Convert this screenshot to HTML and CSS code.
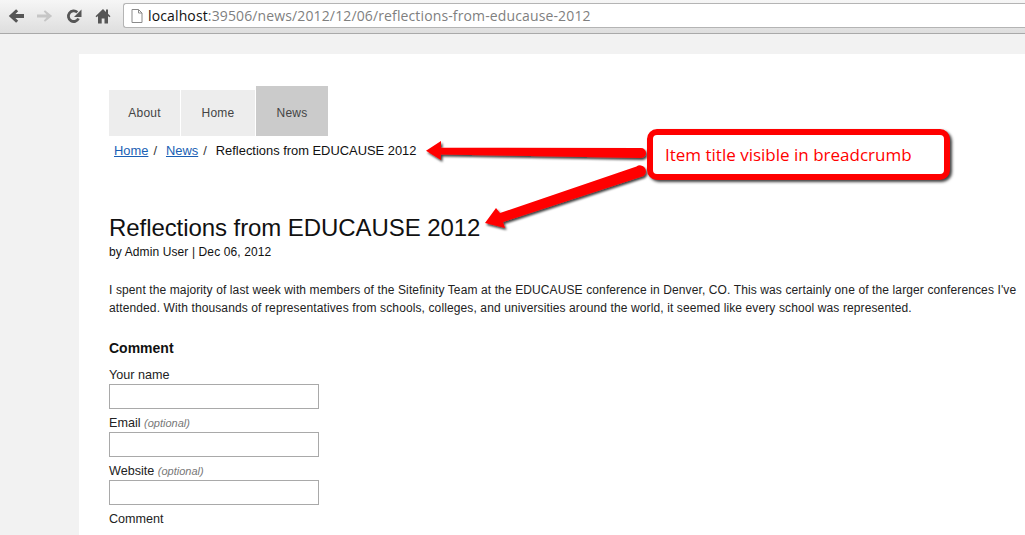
FILE: index.html
```html
<!DOCTYPE html>
<html lang="en">
<head>
<meta charset="utf-8">
<title>Reflections from EDUCAUSE 2012</title>
<link rel="stylesheet" href="styles.css">
</head>
<body>
<header class="toolbar">
  <svg class="nav-icon" viewBox="0 0 16 16" width="16" height="16"><path d="M16 6H7.400l2.800-2.800L8.100 1.200.8 8l7.300 6.800 2.100-2L7.400 10H16z" fill="#565656"/></svg>
  <svg class="nav-icon" viewBox="0 0 16 16" width="16" height="16"><path d="M0 6.500h9.600L6.800 3.400 8 2.200 15.200 8 8 13.800l-1.200-1.200 2.800-3.100H0z" fill="#c6c6c6"/></svg>
  <svg class="nav-icon" viewBox="0 0 16 16" width="16" height="16"><path d="M12.500 10.500A5.300 5.300 0 1 1 11.300 4.300" fill="none" stroke="#565656" stroke-width="2.800"/><path d="M15.500 1.500v7.500H8z" fill="#565656"/></svg>
  <svg class="nav-icon" viewBox="0 0 16 16" width="16" height="16"><path d="M8 1 .5 8.200l1.100 1.100L3 8v7.500h3.700V10.500h2.800v5H13V8l1.400 1.300 1.100-1.100-2.500-2.400V1.500h-2v2.400z" fill="#565656"/></svg>
  <div class="omnibox">
    <svg class="page-icon" viewBox="0 0 12 14" width="12" height="14"><path d="M1 .5h6.500L11 4v9.500H1zM7.500 .5V4H11" fill="#fff" stroke="#8a8a8a"/></svg>
    <span class="url"><span class="host">localhost</span>:39506/news/2012/12/06/reflections-from-educause-2012</span>
  </div>
</header>

<main class="page">
  <nav class="tabs">
    <a class="tab">About</a>
    <a class="tab">Home</a>
    <a class="tab tab-active">News</a>
  </nav>
  <div class="crumbs">
    <a class="crumb-link">Home</a><span class="sep">/</span>
    <a class="crumb-link">News</a><span class="sep">/</span>
    <span class="crumb-current">Reflections from EDUCAUSE 2012</span>
  </div>
  <h1 class="title">Reflections from EDUCAUSE 2012</h1>
  <p class="meta">by Admin User | Dec 06, 2012</p>
  <p class="body-text">I spent the majority of last week with members of the Sitefinity Team at the EDUCAUSE conference in Denver, CO. This was certainly one of the larger conferences I've attended. With thousands of representatives from schools, colleges, and universities around the world, it seemed like every school was represented.</p>
  <h2 class="form-title">Comment</h2>
  <form class="form">
    <label class="field-label">Your name</label>
    <div class="input"></div>
    <label class="field-label">Email <em class="optional">(optional)</em></label>
    <div class="input"></div>
    <label class="field-label">Website <em class="optional">(optional)</em></label>
    <div class="input"></div>
    <label class="field-label">Comment</label>
  </form>
</main>

<svg class="arrows" width="1025" height="535" viewBox="0 0 1025 535">
  <defs>
    <filter id="shade" x="-10%" y="-30%" width="120%" height="160%">
      <feDropShadow dx="1.500" dy="2" stdDeviation="1.200" flood-color="#000" flood-opacity=".75"/>
    </filter>
  </defs>
  <g filter="url(#shade)">
    <path d="M641 148 441 147.700V141L426 150.700 441 160V154.500L641 158a5 5 0 0 0 0-10z" fill="#f00"/>
    <path d="M636.500 166.500 500 213 496 208 485 223 505 228 503 222 643.500 176a5 5 0 0 0-7-9.500z" fill="#f00"/>
  </g>
</svg>
<div class="callout">Item title visible in breadcrumb</div>
</body>
</html>
```

FILE: styles.css
```css
* { box-sizing: border-box; }
html, body { margin: 0; height: 535px; overflow: hidden; }
body { background: #f2f2f2; font-family: "Liberation Sans", Arial, sans-serif; color: #111; position: relative; }

.toolbar {
  height: 34px;
  display: flex;
  align-items: center;
  padding: 0 0 2px 8px;
  gap: 13px;
  background: linear-gradient(#f6f6f6, #dedede);
  border-bottom: 1px solid #a9a9a9;
}
.nav-icon { flex: none; }
.omnibox {
  flex: 1;
  height: 25px;
  margin: 0 -4px 0 -1px;
  display: flex;
  align-items: center;
  gap: 5px;
  padding-left: 7px;
  background: #fff;
  border: 1px solid #b4b4b4;
  border-right: 0;
  border-radius: 3px 0 0 3px;
}
.page-icon { flex: none; }
.url { font: 14px "Open Sans", sans-serif; letter-spacing: .13px; color: #7f7f7f; white-space: nowrap; }
.host { color: #111; }

.page {
  margin: 20px 0 0 79px;
  height: 481px;
  padding: 32px 0 0 30px;
  background: #fff;
}
.tabs { display: flex; align-items: flex-end; gap: 1px; height: 50px; }
.tab {
  width: 71px;
  height: 46px;
  display: flex;
  align-items: center;
  justify-content: center;
  background: #ededed;
  color: #444;
  font-size: 12px;
  letter-spacing: .2px;
}
.tab:nth-child(2) { width: 74px; }
.tab-active { width: 72px; height: 50px; padding-top: 4px; background: #cbcbcb; }
.crumbs {
  height: 14px;
  margin: 7px 0 0 5px;
  display: flex;
  align-items: center;
  font-size: 12.9px;
  color: #333;
  white-space: nowrap;
}
.crumb-link { color: #1a5fb4; text-decoration: underline; }
.sep { margin: 0 9px 0 5px; }
.crumb-current { color: #111; }

.title { margin: 57px 0 0; font-size: 24px; line-height: 28px; font-weight: 400; letter-spacing: -.07px; color: #111; white-space: nowrap; }
.meta { margin: 2px 0 0; font-size: 12px; line-height: 16px; letter-spacing: .11px; }
.body-text { margin: 21px 0 0; width: 916px; font-size: 12px; line-height: 18px; letter-spacing: .115px; color: #222; }
.form-title { margin: 22px 0 0; font-size: 14px; line-height: 18px; font-weight: 700; color: #111; }
.form { margin-top: 11px; display: flex; flex-direction: column; }
.field-label { font-size: 12.6px; line-height: 14px; height: 16px; color: #222; }
.input { width: 210px; height: 25px; margin-bottom: 7px; border: 1px solid #a9a9a9; background: #fff; }
.optional { color: #777; font-size: 11px; }

.arrows { position: absolute; left: 0; top: 0; pointer-events: none; }
.callout {
  position: absolute;
  left: 647px;
  top: 129px;
  width: 303px;
  height: 51px;
  padding: 0 0 0 12px;
  display: flex;
  align-items: center;
  border: 6px solid #f00;
  border-radius: 10px;
  background: #fff;
  box-shadow: 2px 2px 3px rgba(0,0,0,.75);
  color: #f00;
  font: 17px "Open Sans", sans-serif;
  white-space: nowrap;
}
```
